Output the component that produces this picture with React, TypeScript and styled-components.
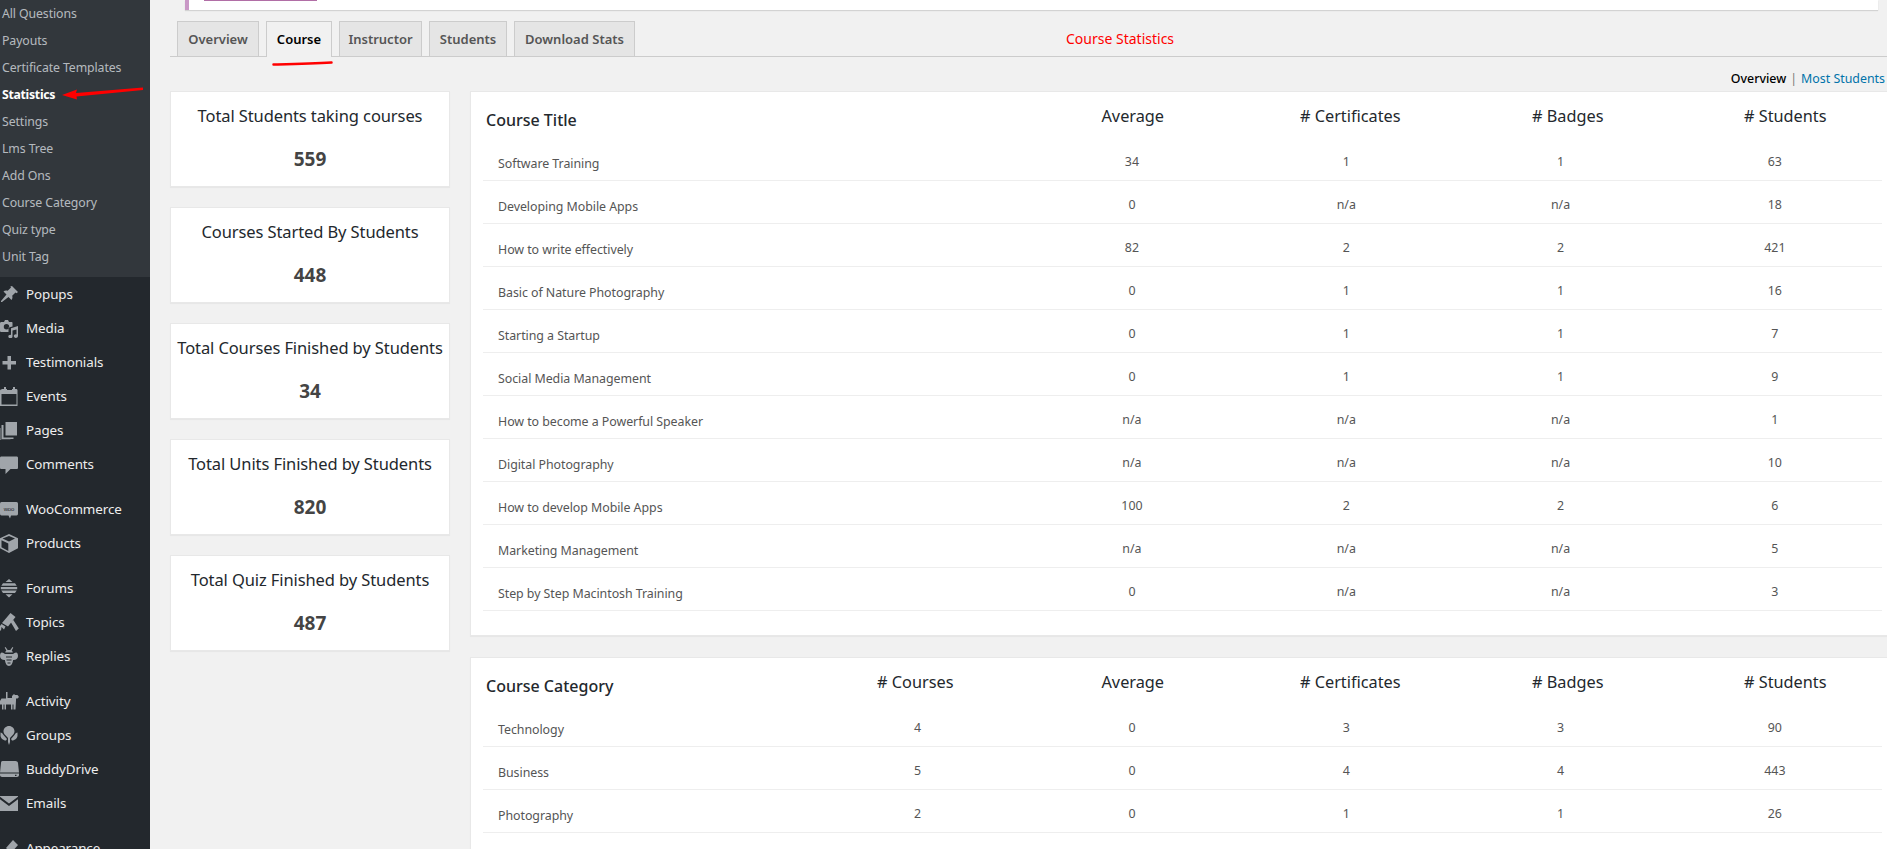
import React from "react"
import styled, { createGlobalStyle } from "styled-components"

const GlobalStyle = createGlobalStyle`
	html, body {
		margin: 0;
		padding: 0;
		height: 100%;
		overflow: hidden;
		background: #f1f1f1;
	}
	body {
		font-family: "Noto Sans", "Open Sans", sans-serif;
	}
`

const subItems = [
	"All Questions",
	"Payouts",
	"Certificate Templates",
	"Statistics",
	"Settings",
	"Lms Tree",
	"Add Ons",
	"Course Category",
	"Quiz type",
	"Unit Tag",
]

const Pin = () => (
	<path d="M12 1l6 6-1.500 1.200-1-.7-3.300 3.300c.6 1.700.2 3.200-.7 4.200l-3-3L2 17l-1 0 0-1 5.500-6.500-3-3c1-.9 2.500-1.300 4.200-.7l3.300-3.300-.7-1z" />
)
const Media = () => (
	<>
		<path
			fillRule="evenodd"
			d="M1.500 3H4l1-2h3l1 2h2.500c.8 0 1 .5 1 1v3.500l-4 1V13H1.500c-1 0-1.500-.5-1.500-1.500v-7C0 3.500.5 3 1.500 3zM6.500 5a2.700 2.700 0 1 0 0 5.400 2.700 2.700 0 0 0 0-5.400z"
		/>
		<path d="M18 7v10c0 1.200-1 1.900-2.200 1.900s-2-.8-2-1.800.9-1.800 2-1.800l.7.1v-5l-4 1v6c0 1.200-1 1.900-2.200 1.900s-2-.7-2-1.700.9-1.800 2-1.800l.7.1V9.300z" />
	</>
)
const Plus = () => <path d="M7.500 3h3.500v5h5v3.500h-5v5H7.500v-5h-5V8h5z" />
const Calendar = () => (
	<path d="M3 2h1V0h2v2h1V1h0v2h5V1h0v1h1V0h2v2h1c1 0 1.500.5 1.500 1.500V19H0V3.500C0 2.500 2 2 3 2zM1.500 7v10.500h15V7z" />
)
const Pages = () => (
	<path d="M5.500 1H17v13.500H5.500zM3.500 4v12.500h10v1.500H1.500V4zM0 7v12h10.500v-.3H.5V7z" />
)
const Bubble = () => (
	<path d="M1.500 1.500h15c1 0 1.500.5 1.500 1.500v9.500c0 1-.5 1.500-1.500 1.500h-6l-5 5v-5h-4C.5 14 0 13.500 0 12.500V3c0-1 .5-1.500 1.500-1.500z" />
)
const Woo = () => (
	<>
		<path d="M1.500 2h15c1 0 1.500.7 1.500 2v9.500c0 1.300-.5 2-1.500 2H11l-1 3-1.500-3h-7c-1 0-1.500-.7-1.500-2V4c0-1.300.5-2 1.500-2z" />
		<text x="9" y="10.800" fontSize="6" fontFamily="Liberation Sans, sans-serif" textAnchor="middle" fill="#23282d">
			woo
		</text>
	</>
)
const Box = () => (
	<path
		fillRule="evenodd"
		d="M9 0l9 4.200v10L9 19 0 14.200v-10zM2.500 4.600l6.500 3 6-3-6-2.700zM1.500 6.200v7l6.800 3.700V9.500z"
	/>
)
const Forums = () => (
	<path d="M9 0l3.500 3h-7zM3 4.300h12l1.700 2.500H1.300zM.8 8h16.400v2.200H.8zM1.300 11.400h15.400L15 14H3zM5.500 15.200h7L9 18.500z" />
)
const Gavel = () => (
	<path d="M10.500 0l5 4-7.500 9.500-6-3.500zM11 9.500l2.300-2.500 5.500 8.500-2.800 2.500zM0 13l1.500-2 4 2.500L4 16.500 1.500 14l-.5 3.500H0z" />
)
const Bee = () => (
	<>
		<path d="M5.500 0l2.200 3h2.600l2.200-3 .8.500-1.600 2.900c.7.500 1.100 1.300 1.100 2.100H5.200c0-.8.400-1.600 1.100-2.100L4.700.5zM5 7h8c1-.6 2-1.500 3-1.500 1.400 0 2 1.700 2 3.500 0 2.500-2 4-4.500 4h-.4c-.4 3-1.800 6-4.100 6s-3.700-3-4.100-6h-.4C2 13 0 11.500 0 9c0-1.800.6-3.500 2-3.500 1 0 2 .9 3 1.500z" />
		<path d="M6 10h6M6.500 13h5M7.500 16h3" stroke="#23282d" strokeWidth="1" fill="none" />
	</>
)
const Dog = () => (
	<path d="M6 0h1.500v6H12V4l2-2 1 1h2.500L19 5l-1.500 1.500h-1.500v2l-.5 9h-2v-5h-1v5h-1.500v-5H6v5H4.500v-5h-1v5H2v-5H0V9l1.500-2.500H6z" />
)
const Balloon = () => (
	<path d="M9 0c3 0 5.500 2.300 5.500 5.200 0 1.500-.7 2.800-1.700 3.800L10 12V16l-1 3-1-3v-4L5.200 9C4.200 8 3.500 6.700 3.500 5.200 3.500 2.300 6 0 9 0zM.5 6.500c1.200 0 2.200 1 2.800 2.200L7 13l-1 1.500c-3 0-5.500-2.500-5.500-5zM17.500 6.500c-1.200 0-2.200 1-2.800 2.200L11 13l1 1.500c3 0 5.500-2.500 5.500-5z" />
)
const Drive = () => (
	<path
		fillRule="evenodd"
		d="M2.500 1h13c1 0 2.500.8 2.500 2l1 9.500H0L1 3c0-1.200.5-2 1.500-2zM0 13.500h19V15c0 1-1 2-2 2H2c-1 0-2-1-2-2zM15 14.800V16h1.500v-1.200z"
	/>
)
const Mail = () => <path d="M0 2h18v.8L9 9.500 0 2.800zM0 5.300l9 6.700 9-6.700V17H0z" />
const Brush = () => <path d="M13 1l5 5-7 8-5-5zM5 10l4 4c-1 2-3 3-5 3H0c2-1 2-2 2.500-4C3 11.500 4 10.500 5 10z" />

const mainGroups = [
	[
		{ label: "Popups", icon: <Pin /> },
		{ label: "Media", icon: <Media /> },
		{ label: "Testimonials", icon: <Plus /> },
		{ label: "Events", icon: <Calendar /> },
		{ label: "Pages", icon: <Pages /> },
		{ label: "Comments", icon: <Bubble /> },
	],
	[
		{ label: "WooCommerce", icon: <Woo /> },
		{ label: "Products", icon: <Box /> },
	],
	[
		{ label: "Forums", icon: <Forums /> },
		{ label: "Topics", icon: <Gavel /> },
		{ label: "Replies", icon: <Bee /> },
	],
	[
		{ label: "Activity", icon: <Dog /> },
		{ label: "Groups", icon: <Balloon /> },
		{ label: "BuddyDrive", icon: <Drive /> },
		{ label: "Emails", icon: <Mail /> },
	],
	[{ label: "Appearance", icon: <Brush /> }],
]

const tabs = [
	{ label: "Overview", width: 82 },
	{ label: "Course", width: 66, active: true },
	{ label: "Instructor", width: 83 },
	{ label: "Students", width: 78 },
	{ label: "Download Stats", width: 121 },
]

const stats = [
	{ title: "Total Students taking courses", value: 559 },
	{ title: "Courses Started By Students", value: 448 },
	{ title: "Total Courses Finished by Students", value: 34 },
	{ title: "Total Units Finished by Students", value: 820 },
	{ title: "Total Quiz Finished by Students", value: 487 },
]

const courseHead = ["Average", "# Certificates", "# Badges", "# Students"]
const courseRows = [
	["Software Training", "34", "1", "1", "63"],
	["Developing Mobile Apps", "0", "n/a", "n/a", "18"],
	["How to write effectively", "82", "2", "2", "421"],
	["Basic of Nature Photography", "0", "1", "1", "16"],
	["Starting a Startup", "0", "1", "1", "7"],
	["Social Media Management", "0", "1", "1", "9"],
	["How to become a Powerful Speaker", "n/a", "n/a", "n/a", "1"],
	["Digital Photography", "n/a", "n/a", "n/a", "10"],
	["How to develop Mobile Apps", "100", "2", "2", "6"],
	["Marketing Management", "n/a", "n/a", "n/a", "5"],
	["Step by Step Macintosh Training", "0", "n/a", "n/a", "3"],
]

const categoryHead = ["# Courses", "Average", "# Certificates", "# Badges", "# Students"]
const categoryRows = [
	["Technology", "4", "0", "3", "3", "90"],
	["Business", "5", "0", "4", "4", "443"],
	["Photography", "2", "0", "1", "1", "26"],
]

const StatsTable = ({
	title,
	head,
	rows,
	bottom,
}: {
	title: string
	head: string[]
	rows: string[][]
	bottom: number
}) => (
	<TableCard $bottom={bottom}>
		<HeadRow $cols={head.length}>
			<TableTitle>{title}</TableTitle>
			{head.map((h) => (
				<HeadCell key={h}>{h}</HeadCell>
			))}
		</HeadRow>
		{rows.map((row) => (
			<BodyRow key={row[0]} $cols={head.length}>
				<NameCell>{row[0]}</NameCell>
				{row.slice(1).map((v, i) => (
					<ValueCell key={i}>{v}</ValueCell>
				))}
			</BodyRow>
		))}
	</TableCard>
)

const App = () => {
	return (
		<Page>
			<GlobalStyle />
			<Sidebar>
				<SubMenu>
					{subItems.map((item) => (
						<SubItem key={item} $current={item === "Statistics"}>
							{item}
						</SubItem>
					))}
				</SubMenu>
				{mainGroups.map((group, i) => (
					<MenuGroup key={i}>
						{group.map((item) => (
							<MenuItem key={item.label}>
								<MenuIcon viewBox="0 0 19 19">{item.icon}</MenuIcon>
								{item.label}
							</MenuItem>
						))}
					</MenuGroup>
				))}
			</Sidebar>
			<Main>
				<Notice>
					<NoticeButton />
				</Notice>
				<TabBar>
					{tabs.map((tab) => (
						<Tab key={tab.label} $width={tab.width} $active={tab.active}>
							{tab.label}
						</Tab>
					))}
					<TabCaption>Course Statistics</TabCaption>
				</TabBar>
				<SubLinks>
					<strong>Overview</strong>
					<Divider>|</Divider>
					<a>Most Students</a>
				</SubLinks>
				<Columns>
					<StatColumn>
						{stats.map((stat) => (
							<StatCard key={stat.title}>
								<StatTitle>{stat.title}</StatTitle>
								<StatValue>{stat.value}</StatValue>
							</StatCard>
						))}
					</StatColumn>
					<TableColumn>
						<StatsTable title="Course Title" head={courseHead} rows={courseRows} bottom={24} />
						<StatsTable title="Course Category" head={categoryHead} rows={categoryRows} bottom={40} />
					</TableColumn>
				</Columns>
			</Main>
			{/* red marks drawn over the screenshot */}
			<Marks viewBox="0 0 1887 849">
				<path d="M143 87.500L76 93l1-3.500L62 95l15 4.500-.500-3L143 90z" fill="#f00" />
				<path d="M273.500 64.500C292 64 312 63.500 331.500 62.500" stroke="#f00" strokeWidth="2.500" strokeLinecap="round" fill="none" />
			</Marks>
		</Page>
	)
}

export default App

const Page = styled.div`
	position: relative;
	display: flex;
	width: 1887px;
	height: 849px;
	overflow: hidden;
	background: #f1f1f1;
`

const Marks = styled.svg`
	position: absolute;
	top: 0;
	left: 0;
	width: 1887px;
	height: 849px;
	pointer-events: none;
`

const Sidebar = styled.aside`
	flex: 0 0 150px;
	background: #23282d;
	color: #eee;
`

const SubMenu = styled.ul`
	margin: 0;
	padding: 0 0 7px;
	list-style: none;
	background: #32373c;
`

const SubItem = styled.li<{ $current?: boolean }>`
	height: 27px;
	padding-left: 2px;
	font-size: 12.3px;
	line-height: 27px;
	letter-spacing: ${({ $current }) => ($current ? "-0.3px" : "-0.1px")};
	color: ${({ $current }) => ($current ? "#fff" : "rgba(240, 245, 250, 0.7)")};
	font-weight: ${({ $current }) => ($current ? 700 : 400)};
`

const MenuGroup = styled.ul`
	margin: 0 0 11px;
	padding: 0;
	list-style: none;
`

const MenuItem = styled.li`
	display: flex;
	align-items: center;
	height: 34px;
	font-size: 13.4px;
	letter-spacing: -0.1px;
	color: #eee;
`

const MenuIcon = styled.svg`
	flex: 0 0 19px;
	width: 19px;
	height: 19px;
	margin-right: 7px;
	fill: #a0a5aa;
`

const Main = styled.main`
	flex: 1;
	min-width: 0;
	padding-left: 20px;
`

const Notice = styled.div`
	height: 10px;
	margin: 0 9px 0 15px;
	padding-left: 15px;
	background: #fff;
	border-left: 4px solid #c998c6;
	box-shadow: 0 1px 1px rgba(0, 0, 0, 0.12);
`

const NoticeButton = styled.div`
	width: 113px;
	height: 1px;
	background: #b16ea6;
`

const TabBar = styled.div`
	display: flex;
	align-items: flex-end;
	box-sizing: border-box;
	height: 36px;
	margin-top: 11px;
	padding-left: 7px;
	border-bottom: 1px solid #ccc;
`

const Tab = styled.div<{ $width: number; $active?: boolean }>`
	box-sizing: border-box;
	width: ${({ $width }) => $width}px;
	height: ${({ $active }) => ($active ? 36 : 35)}px;
	margin-right: 7px;
	margin-bottom: ${({ $active }) => ($active ? -1 : 0)}px;
	border: 1px solid #ccc;
	border-bottom: none;
	background: ${({ $active }) => ($active ? "#f1f1f1" : "#e5e5e5")};
	color: ${({ $active }) => ($active ? "#000" : "#555")};
	font-size: 13px;
	font-weight: 600;
	line-height: 34px;
	text-align: center;
	white-space: nowrap;
`

const TabCaption = styled.div`
	align-self: center;
	margin-left: 424px;
	font-size: 14px;
	color: #f00;
	white-space: nowrap;
`

const SubLinks = styled.div`
	display: flex;
	justify-content: flex-end;
	align-items: center;
	height: 34px;
	padding: 9px 2px 0 0;
	box-sizing: border-box;
	font-size: 12.4px;
	color: #0073aa;

	strong {
		font-weight: 500;
		color: #000;
	}
`

const Divider = styled.span`
	margin: 0 4px;
	color: #777;
`

const Columns = styled.div`
	display: grid;
	grid-template-columns: 280px 1417px;
	column-gap: 20px;
`

const StatColumn = styled.div`
	display: flex;
	flex-direction: column;
	gap: 20px;
`

const StatCard = styled.section`
	box-sizing: border-box;
	height: 96px;
	padding-top: 13px;
	background: #fff;
	border: 1px solid #e8e8e8;
	box-shadow: 0 1px 1px rgba(0, 0, 0, 0.04);
	text-align: center;
`

const StatTitle = styled.h3`
	margin: 0;
	font-size: 16.5px;
	font-weight: 400;
	line-height: 22px;
	letter-spacing: -0.1px;
	color: #23282d;
	white-space: nowrap;
`

const StatValue = styled.div`
	margin-top: 19px;
	font-size: 19px;
	font-weight: 700;
	line-height: 26px;
	color: #444;
`

const TableColumn = styled.div`
	display: flex;
	flex-direction: column;
	gap: 21px;
`

const TableCard = styled.section<{ $bottom: number }>`
	padding: 0 7px ${({ $bottom }) => $bottom}px 12px;
	background: #fff;
	border: 1px solid #e8e8e8;
	border-right: none;
	box-shadow: 0 1px 1px rgba(0, 0, 0, 0.04);
`

const HeadRow = styled.div<{ $cols: number }>`
	display: grid;
	grid-template-columns: 1fr repeat(${({ $cols }) => $cols}, 217.5px);
	align-items: center;
	box-sizing: border-box;
	height: 46px;
	margin-right: -14px;
	padding-left: 3px;
`

const TableTitle = styled.div`
	padding-top: 10px;
	font-size: 16px;
	font-weight: 500;
	line-height: 22px;
	color: #23282d;
`

const HeadCell = styled.div`
	padding-top: 2px;
	font-size: 16.3px;
	font-weight: 400;
	line-height: 22px;
	text-align: center;
	color: #23282d;
`

const BodyRow = styled.div<{ $cols: number }>`
	display: grid;
	grid-template-columns: 1fr repeat(${({ $cols }) => $cols}, 214.3px);
	align-items: center;
	box-sizing: border-box;
	height: 43px;
	margin-right: -2px;
	border-bottom: 1px solid #eee;
`

const NameCell = styled.div`
	padding: 8px 0 0 15px;
	font-size: 12.4px;
	letter-spacing: -0.05px;
	color: #555;
	white-space: nowrap;
`

const ValueCell = styled.div`
	padding-top: 5px;
	font-size: 12.4px;
	text-align: center;
	color: #555;
`
